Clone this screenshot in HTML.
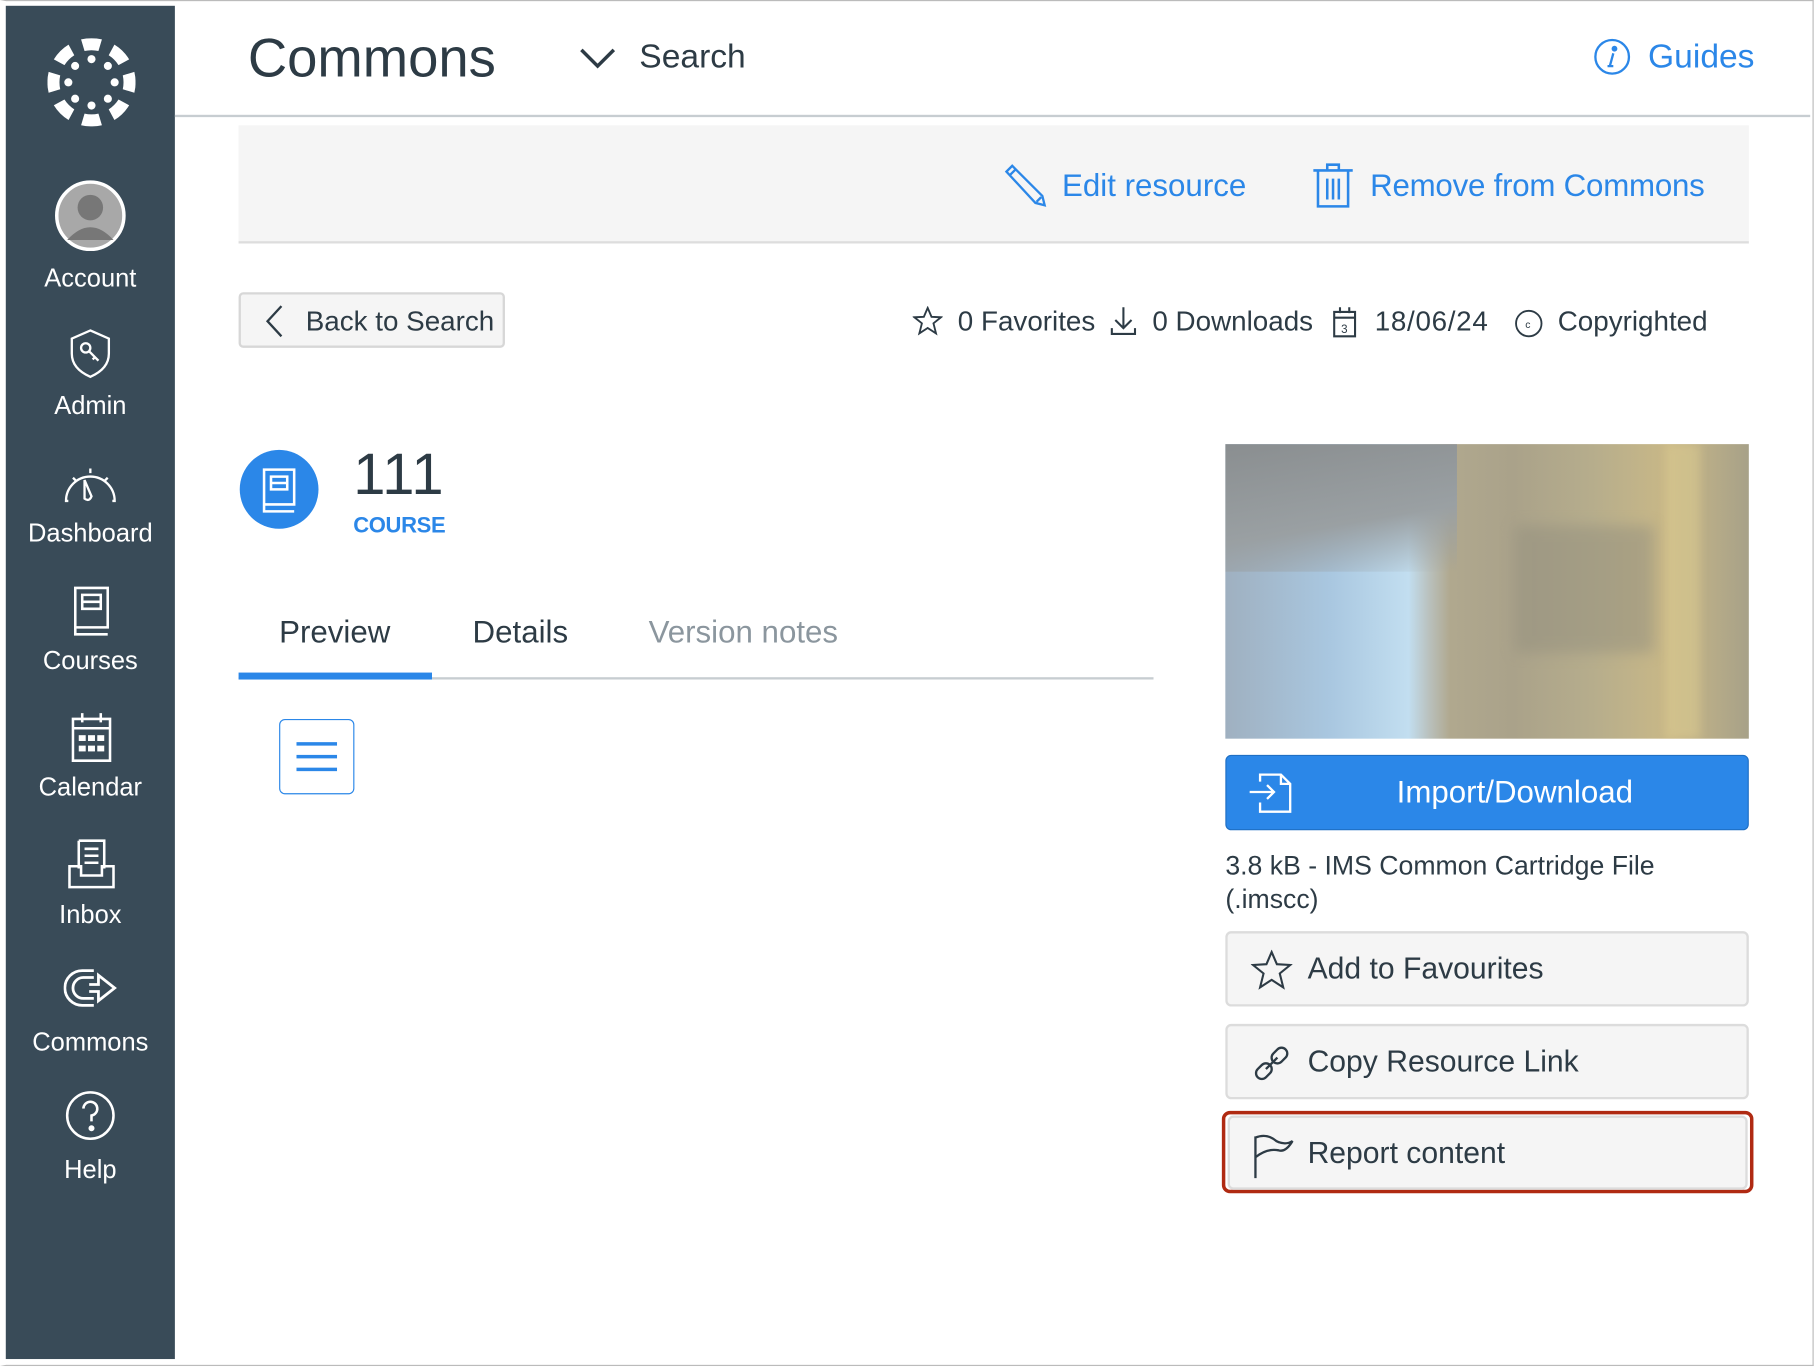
<!DOCTYPE html>
<html><head><meta charset="utf-8">
<style>
*{margin:0;padding:0;box-sizing:border-box}
html,body{width:1816px;height:1366px;overflow:hidden;background:#fff}
#w{position:absolute;left:0;top:0;width:1568px;height:1180px;transform:scale(1.15816,1.1596);transform-origin:0 0;font-family:"Liberation Sans",sans-serif;color:#2d3b45}
.a{position:absolute;white-space:nowrap}
.side{position:absolute;left:5px;top:5px;width:146px;height:1167px;background:#394b58}
.nl{position:absolute;left:0;width:146px;text-align:center;color:#fff;font-size:22px}
.blue{color:#2b87e8}
.btn{position:absolute;left:1058px;width:452px;height:65px;background:#f5f5f5;border:2px solid #dcdcdc;border-radius:5px}
.btn span{position:absolute;left:69px;top:15px;font-size:26px;color:#2d3b45}
.btn svg{position:absolute;left:20px;top:14px}
</style></head><body><div id="w">
<div style="position:absolute;left:0;top:0;width:1566px;height:1178px;border:1px solid #bbb;border-left:5px solid #fff"></div>
<div class="side">
 <svg class="a" style="left:36px;top:28px" width="76" height="76" viewBox="-38 -38 76 76" fill="#fff">
  <g id="p"><path d="M-9 -37 A38 38 0 0 1 9 -37 L6 -27 A28 28 0 0 0 -6 -27Z"/><circle cx="0" cy="-20" r="3.5"/></g>
  <use href="#p" transform="rotate(45)"/><use href="#p" transform="rotate(90)"/><use href="#p" transform="rotate(135)"/><use href="#p" transform="rotate(180)"/><use href="#p" transform="rotate(225)"/><use href="#p" transform="rotate(270)"/><use href="#p" transform="rotate(315)"/>
 </svg>
 <svg class="a" style="left:42px;top:150px" width="62" height="62"><circle cx="31" cy="31" r="29" fill="#a8a8a8" stroke="#fff" stroke-width="3"/><circle cx="31" cy="24" r="11" fill="#777"/><path d="M11 52 Q31 30 51 52" fill="#777"/></svg>
 <div class="nl" style="top:222px">Account</div>
 <svg class="a" style="left:55px;top:278px" width="36" height="44" fill="none" stroke="#fff" stroke-width="2"><path d="M18 2 L34 9 V22 Q34 35 18 42 Q2 35 2 22 V9Z"/><circle cx="14" cy="17" r="4"/><path d="M17 20 L25 28 M22 25 L20 27"/></svg>
 <div class="nl" style="top:332px">Admin</div>
 <svg class="a" style="left:50px;top:395px" width="46" height="34" fill="none" stroke="#fff" stroke-width="2"><path d="M4 32 H2 A21 21 0 1 1 44 32 H42"/><path d="M18 14 L24 28 Q22 33 18 30Z"/><path d="M23 4 V8 M8 12 L11 15 M38 12 L35 15"/></svg>
 <div class="nl" style="top:442px">Dashboard</div>
 <svg class="a" style="left:56px;top:500px" width="34" height="44" fill="none" stroke="#fff" stroke-width="2.2"><path d="M4 2 H32 V36 H4Z M4 36 V42 H32 M10 8 H26 V20 H10Z M10 14 H26"/></svg>
 <div class="nl" style="top:552px">Courses</div>
 <svg class="a" style="left:56px;top:609px" width="36" height="44" fill="none" stroke="#fff" stroke-width="2.2"><path d="M2 6 H34 V42 H2Z M2 14 H34 M10 1 V9 M26 1 V9"/><g fill="#fff" stroke="none"><rect x="7" y="20" width="6" height="5"/><rect x="15" y="20" width="6" height="5"/><rect x="23" y="20" width="6" height="5"/><rect x="7" y="29" width="6" height="5"/><rect x="15" y="29" width="6" height="5"/><rect x="23" y="29" width="6" height="5"/></g></svg>
 <div class="nl" style="top:661px">Calendar</div>
 <svg class="a" style="left:53px;top:718px" width="42" height="44" fill="none" stroke="#fff" stroke-width="2.2"><path d="M10 2 H32 V26 M10 2 V26 M15 9 H27 M15 15 H27 M15 21 H27 M2 24 V42 H40 V24 H30 V32 H12 V24Z"/></svg>
 <div class="nl" style="top:771px">Inbox</div>
 <svg class="a" style="left:50px;top:828px" width="48" height="40" fill="none" stroke="#fff" stroke-width="2.4"><path d="M26 4 H16 A14 14 0 0 0 16 34 H26 M26 10 H17 A8 8 0 0 0 17 28 H26 M22 16 H30 V8 L44 19 L30 30 V22 H22"/></svg>
 <div class="nl" style="top:881px">Commons</div>
 <svg class="a" style="left:51px;top:935px" width="44" height="44" fill="none" stroke="#fff" stroke-width="2.2"><circle cx="22" cy="22" r="20"/><path d="M16 16 A6 6 0 1 1 23 22 V27"/><circle cx="23" cy="33" r="1.5" fill="#fff"/></svg>
 <div class="nl" style="top:991px">Help</div>
</div>

<div class="a" style="left:214px;top:22px;font-size:47px;color:#2d3b45">Commons</div>
<svg class="a" style="left:500px;top:40px" width="32" height="20" fill="none" stroke="#2d3b45" stroke-width="3"><path d="M2 3 L16 17 L30 3"/></svg>
<div class="a" style="left:552px;top:33px;font-size:29px">Search</div>
<svg class="a" style="left:1376px;top:33px" width="32" height="32" fill="none" stroke="#2b87e8" stroke-width="2"><circle cx="16" cy="16" r="14.5"/><circle cx="18" cy="9" r="1.5" fill="#2b87e8"/><path d="M17 13 L14 24 M12 24 H17"/></svg>
<div class="a blue" style="left:1423px;top:33px;font-size:29px">Guides</div>
<div class="a" style="left:151px;top:99px;width:1412px;height:2px;background:#c7cdd1"></div>

<div class="a" style="left:206px;top:108px;width:1304px;height:102px;background:#f5f5f5;border-bottom:2px solid #ddd"></div>
<svg class="a" style="left:866px;top:141px" width="38" height="38" fill="none" stroke="#2b87e8" stroke-width="2"><path d="M3 7 L8 2 L34 28 L36 36 L28 34Z M6 10 L11 5 M29 33 L33 29"/></svg>
<div class="a blue" style="left:917px;top:145px;font-size:27px">Edit resource</div>
<svg class="a" style="left:1133px;top:140px" width="36" height="40" fill="none" stroke="#2b87e8" stroke-width="2.2"><path d="M1 7 H35 M13 7 V2 H23 V7 M5 7 V38 H31 V7 M13 14 V32 M18 14 V32 M23 14 V32"/></svg>
<div class="a blue" style="left:1183px;top:145px;font-size:27px;letter-spacing:-0.2px">Remove from Commons</div>

<div class="a" style="left:206px;top:252px;width:230px;height:48px;background:#f5f5f5;border:2px solid #d7d7d7;border-radius:4px"></div>
<svg class="a" style="left:228px;top:262px" width="18" height="30" fill="none" stroke="#2d3b45" stroke-width="2"><path d="M15 2 L3 15 L15 28"/></svg>
<div class="a" style="left:264px;top:264px;font-size:24px">Back to Search</div>

<svg class="a" style="left:788px;top:264px" width="26" height="26" fill="none" stroke="#2d3b45" stroke-width="1.6"><path d="M13 1.5 L16.3 9.2 L24.5 9.6 L18 14.8 L20.2 23.5 L13 18.8 L5.8 23.5 L8 14.8 L1.5 9.6 L9.7 9.2Z"/></svg>
<div class="a" style="left:827px;top:264px;font-size:24px">0 Favorites</div>
<svg class="a" style="left:958px;top:263px" width="24" height="28" fill="none" stroke="#2d3b45" stroke-width="1.8"><path d="M12 2 V20 M5 13 L12 20 L19 13 M2 20 V25 H22 V20"/></svg>
<div class="a" style="left:995px;top:264px;font-size:24px">0 Downloads</div>
<svg class="a" style="left:1150px;top:264px" width="22" height="28" fill="none" stroke="#2d3b45" stroke-width="1.8"><path d="M2 5 H20 V26 H2Z M2 10 H20 M7 1 V6 M15 1 V6"/><text x="8" y="23" font-size="10" fill="#2d3b45" stroke="none" font-family="Liberation Sans">3</text></svg>
<div class="a" style="left:1187px;top:264px;font-size:24px;letter-spacing:0.6px">18/06/24</div>
<svg class="a" style="left:1307px;top:266px" width="26" height="26" fill="none" stroke="#2d3b45" stroke-width="1.6"><circle cx="13" cy="13" r="11"/><text x="10" y="17" font-size="9" fill="#2d3b45" stroke="none" font-family="Liberation Sans">c</text></svg>
<div class="a" style="left:1345px;top:264px;font-size:24px">Copyrighted</div>

<div class="a" style="left:207px;top:388px;width:68px;height:68px;border-radius:50%;background:#2b87e8"></div>
<svg class="a" style="left:223px;top:402px" width="36" height="42" fill="none" stroke="#fff" stroke-width="2.2"><path d="M5 3 H31 V33 H5Z M5 33 V39 H31 M11 9 H25 V20 H11Z M11 14.5 H25"/></svg>
<div class="a" style="left:305px;top:380px;font-size:50px;color:#2d3b45;letter-spacing:1px">111</div>
<div class="a blue" style="left:305px;top:443px;font-size:19px;font-weight:bold;letter-spacing:-0.3px">COURSE</div>

<div class="a" style="left:241px;top:530px;font-size:27px">Preview</div>
<div class="a" style="left:408px;top:530px;font-size:27px">Details</div>
<div class="a" style="left:560px;top:530px;font-size:27px;color:#8b969e">Version notes</div>
<div class="a" style="left:206px;top:584px;width:790px;height:2px;background:#c7cdd1"></div>
<div class="a" style="left:206px;top:580px;width:167px;height:6px;background:#2b87e8"></div>

<div class="a" style="left:241px;top:620px;width:65px;height:65px;border:1.5px solid #2b87e8;border-radius:5px"></div>
<div class="a" style="left:256px;top:640px;width:35px;height:3px;background:#2b87e8;box-shadow:0 11px 0 #2b87e8,0 22px 0 #2b87e8"></div>

<div class="a" style="left:1058px;top:383px;width:452px;height:254px;overflow:hidden;background:linear-gradient(90deg,#9fb0c0 0%,#a9c7e0 20%,#c2def0 35%,#b9c0bc 39%,#b0a88e 43%,#aaa28a 55%,#b6ad8c 70%,#c9b887 85%,#a7a188 100%)">
 <div class="a" style="left:0;top:0;width:200px;height:110px;background:linear-gradient(170deg,#8a8e90,#9aa0a3 60%,rgba(160,170,180,0))"></div>
 <div class="a" style="left:250px;top:70px;width:120px;height:110px;background:#938f7e;opacity:.5;filter:blur(6px)"></div>
 <div class="a" style="left:380px;top:0;width:30px;height:254px;background:#d8c890;opacity:.6;filter:blur(4px)"></div>
</div>

<div class="a" style="left:1058px;top:651px;width:452px;height:65px;background:#2b87e8;border:1px solid #1f6fc4;border-radius:5px"></div>
<svg class="a" style="left:1078px;top:666px" width="40" height="36" fill="none" stroke="#fff" stroke-width="2"><path d="M10 8 V2 H28 L36 10 V34 H10 V26 M28 2 V10 H36 M1 17 H22 M16 11 L22 17 L16 23"/></svg>
<div class="a" style="left:1058px;top:668px;width:500px;text-align:center;font-size:27px;color:#fff">Import/Download</div>
<div class="a" style="left:1058px;top:732px;font-size:23px;line-height:29px;white-space:normal;width:452px">3.8 kB - IMS Common Cartridge File<br>(.imscc)</div>

<div class="btn" style="top:803px"><svg width="36" height="36" fill="none" stroke="#2d3b45" stroke-width="1.8"><path d="M18 2 L22.5 12.5 L34 13.2 L25 20.5 L28 32.5 L18 26 L8 32.5 L11 20.5 L2 13.2 L13.5 12.5Z"/></svg><span>Add to Favourites</span></div>
<div class="btn" style="top:883px"><svg width="36" height="36" fill="none" stroke="#2d3b45" stroke-width="2"><g transform="rotate(-45 18 18)"><rect x="1" y="13" width="15" height="10" rx="5"/><rect x="20" y="13" width="15" height="10" rx="5"/><path d="M11 18 H25"/></g></svg><span>Copy Resource Link</span></div>
<div class="a" style="left:1055px;top:958px;width:459px;height:71px;border:3.5px solid #b02a12;border-radius:7px"></div>
<div class="btn" style="top:962px;left:1060px;width:449px;height:64px"><svg width="36" height="40" fill="none" stroke="#2d3b45" stroke-width="2"><path d="M2 2 V38 M2 3 Q12 -1 20 6 Q28 10 34 6 Q28 16 22 14 Q12 12 2 20"/></svg><span style="left:67px">Report content</span></div>
</div></body></html>
